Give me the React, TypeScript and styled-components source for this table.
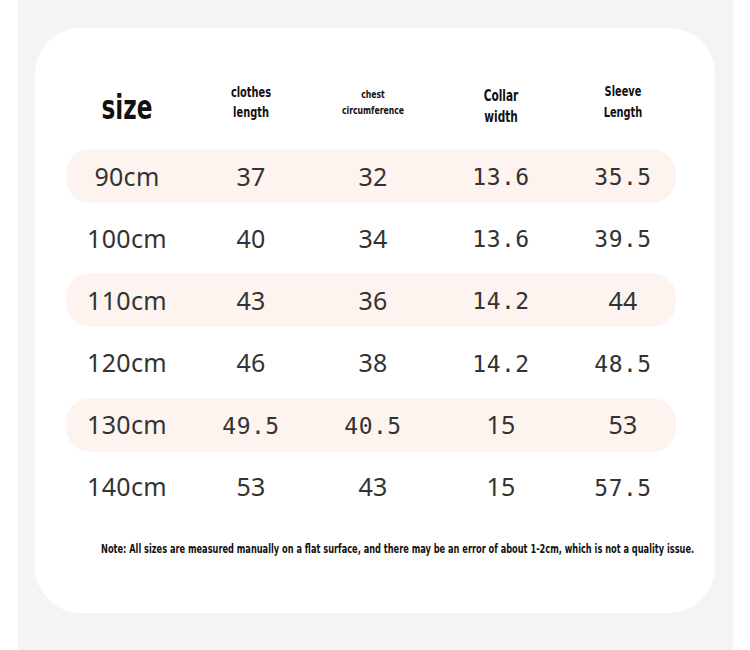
import React from "react";
import styled, { createGlobalStyle } from "styled-components";

const Global = createGlobalStyle`
  html, body { margin: 0; padding: 0; background: #ffffff; }
  body { width: 750px; height: 650px; overflow: hidden; }
`;

const Page = styled.div`
  width: 750px;
  height: 650px;
  background: #ffffff;
  display: flex;
  padding-left: 18px;
  box-sizing: border-box;
`;

const Band = styled.div`
  width: 715px;
  height: 650px;
  background: #f4f4f4;
  padding: 28px 0 0 17px;
  box-sizing: border-box;
`;

const Card = styled.div`
  width: 680px;
  height: 585px;
  background: #ffffff;
  border-radius: 46px;
  padding: 0 0 0 31px;
  box-sizing: border-box;
  display: flex;
  flex-direction: column;
`;

const cols = "122px 126px 118px 138px 106px";

const HeaderRow = styled.div`
  display: grid;
  grid-template-columns: ${cols};
  width: 610px;
  height: 121px;
  align-items: center;
  padding-top: 26px;
  box-sizing: border-box;
`;

const HeadCell = styled.div<{ $size: number; $lh: number; $dy?: number }>`
  text-align: center;
  font-family: "DejaVu Sans Condensed", "Liberation Sans Narrow", sans-serif;
  font-weight: bold;
  font-size: ${(p) => p.$size}px;
  line-height: ${(p) => p.$lh}px;
  color: #111;
  transform: scaleX(0.78) translateY(${(p) => p.$dy ?? 0}px);
  white-space: nowrap;
`;

const Body = styled.div`
  display: flex;
  flex-direction: column;
  gap: 8.2px;
  width: 610px;
`;

const Row = styled.div<{ $shade: boolean }>`
  display: grid;
  grid-template-columns: ${cols};
  height: 54px;
  align-items: center;
  border-radius: 24px;
  background: ${(p) => (p.$shade ? "#fdf4ef" : "transparent")};
`;

const Cell = styled.div<{ $mono: boolean }>`
  text-align: center;
  font-family: ${(p) =>
    p.$mono ? '"DejaVu Sans Mono", monospace' : '"Noto Sans", "Noto Sans CJK SC", sans-serif'};
  font-size: ${(p) => (p.$mono ? "23px" : "25px")};
  letter-spacing: ${(p) => (p.$mono ? "0.5px" : "0.3px")};
  padding-top: ${(p) => (p.$mono ? "3px" : "0")};
  color: #333;
  line-height: 1;
`;

const Note = styled.div`
  margin-top: 28px;
  margin-left: 35px;
  font-family: "DejaVu Sans Condensed", "Liberation Sans Narrow", sans-serif;
  font-weight: bold;
  font-size: 11.5px;
  color: #111;
  white-space: nowrap;
  transform: scaleX(0.795);
  transform-origin: left center;
`;

const data: string[][] = [
  ["90cm", "37", "32", "13.6", "35.5"],
  ["100cm", "40", "34", "13.6", "39.5"],
  ["110cm", "43", "36", "14.2", "44"],
  ["120cm", "46", "38", "14.2", "48.5"],
  ["130cm", "49.5", "40.5", "15", "53"],
  ["140cm", "53", "43", "15", "57.5"],
];

export default function App() {
  return (
    <>
      <Global />
      <Page>
        <Band>
          <Card>
            <HeaderRow>
              <HeadCell $size={33} $lh={36} $dy={6}>size</HeadCell>
              <HeadCell $size={14} $lh={20}>clothes<br />length</HeadCell>
              <HeadCell $size={11} $lh={16} $dy={1}>chest<br />circumference</HeadCell>
              <HeadCell $size={15} $lh={21} $dy={5}>Collar<br />width</HeadCell>
              <HeadCell $size={14} $lh={21}>Sleeve<br />Length</HeadCell>
            </HeaderRow>
            <Body>
              {data.map((r, i) => (
                <Row key={r[0]} $shade={i % 2 === 0}>
                  {r.map((v, j) => (
                    <Cell key={j} $mono={v.includes(".")}>{v}</Cell>
                  ))}
                </Row>
              ))}
            </Body>
            <Note>
              Note: All sizes are measured manually on a flat surface, and there may be an error of about 1-2cm, which is not a quality issue.
            </Note>
          </Card>
        </Band>
      </Page>
    </>
  );
}
